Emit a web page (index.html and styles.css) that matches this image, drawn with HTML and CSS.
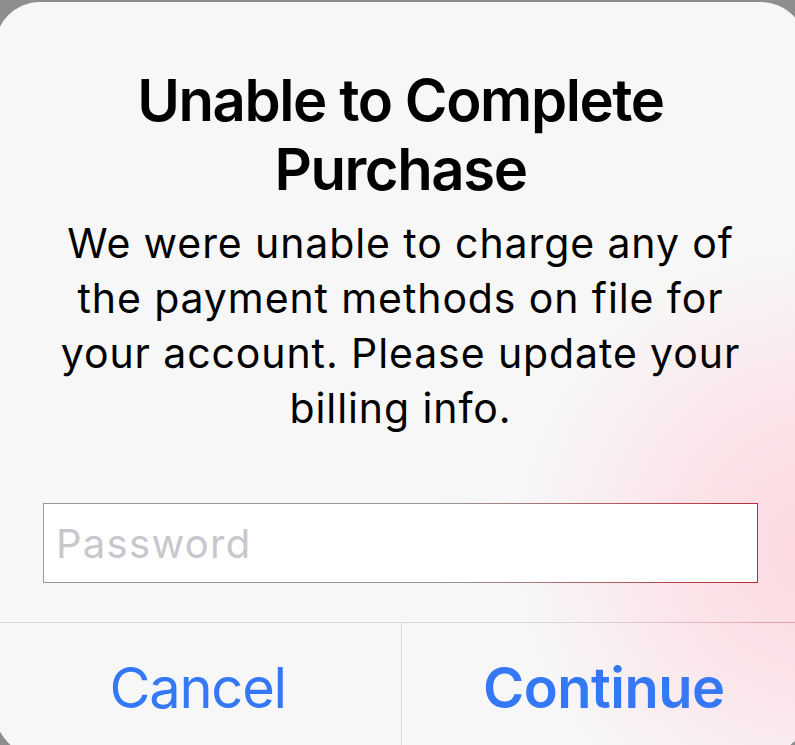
FILE: index.html
```html
<!DOCTYPE html>
<html lang="en">
<head>
  <meta charset="UTF-8">
  <title>Unable to Complete Purchase</title>
  <link rel="stylesheet" href="styles.css">
</head>
<body>
  <div class="alert">
    <div class="alert-body">
      <h1 class="alert-title">Unable to Complete Purchase</h1>
      <p class="alert-message">We were unable to charge any of the payment methods on file for your account. Please update your billing info.</p>
      <input class="alert-input" type="password" placeholder="Password">
    </div>
    <div class="alert-actions">
      <button class="action" type="button">Cancel</button>
      <button class="action action-primary" type="button">Continue</button>
    </div>
  </div>
</body>
</html>
```

FILE: styles.css
```css
* {
  box-sizing: border-box;
}

html, body {
  height: 100%;
}

body {
  margin: 0;
  background-color: #8e8e8e;
  overflow: hidden;
  font-family: Inter, "Noto Sans", sans-serif;
  color: #000;
}

.alert {
  margin: 2px -11px 0 -5px;
  height: 754px;
  border-radius: 45px;
  background:
    radial-gradient(circle at 822px 545px, #fcd9e1 0, rgba(252, 221, 228, 0.75) 140px, rgba(247, 247, 247, 0) 300px),
    #f7f7f7;
  display: flex;
  flex-direction: column;
  overflow: hidden;
}

.alert-body {
  padding: 64px 48px 39px;
  display: flex;
  flex-direction: column;
  align-items: center;
}

.alert-title {
  margin: 0;
  font-size: 58px;
  line-height: 69px;
  font-weight: 600;
  text-align: center;
  letter-spacing: -1.4px;
}

.alert-message {
  margin: 12px 0 0;
  font-size: 41px;
  line-height: 55px;
  font-weight: 400;
  text-align: center;
  letter-spacing: 0.9px;
}

.alert-input {
  margin-top: 67px;
  width: 100%;
  height: 80px;
  padding: 0 12px;
  border: 1px solid #9a9a9a;
  border-image: linear-gradient(to right, #9a9a9a 55%, #c22a35 100%) 1;
  border-radius: 0;
  background: #fff;
  font-family: inherit;
  font-size: 40px;
  letter-spacing: 1.3px;
  color: #000;
  outline: none;
}

.alert-input::placeholder {
  color: #c7c7cd;
}

.alert-actions {
  flex: 1;
  display: grid;
  grid-template-columns: 1fr 1fr;
  border-top: 1px solid #d9d9d9;
  border-image: linear-gradient(to right, #d9d9d9 70%, #e79aac 100%) 1;
}

.action {
  border: none;
  background: none;
  padding: 37px 0 0;
  align-self: start;
  font-family: inherit;
  font-size: 56px;
  line-height: 1;
  font-weight: 400;
  letter-spacing: -1.2px;
  color: #3478f6;
  text-align: center;
  cursor: pointer;
}

.action + .action {
  border-left: 1px solid #d9d9d9;
  align-self: stretch;
  display: flex;
  justify-content: center;
  align-items: flex-start;
}

.action-primary {
  font-weight: 600;
  letter-spacing: -0.5px;
}
```
